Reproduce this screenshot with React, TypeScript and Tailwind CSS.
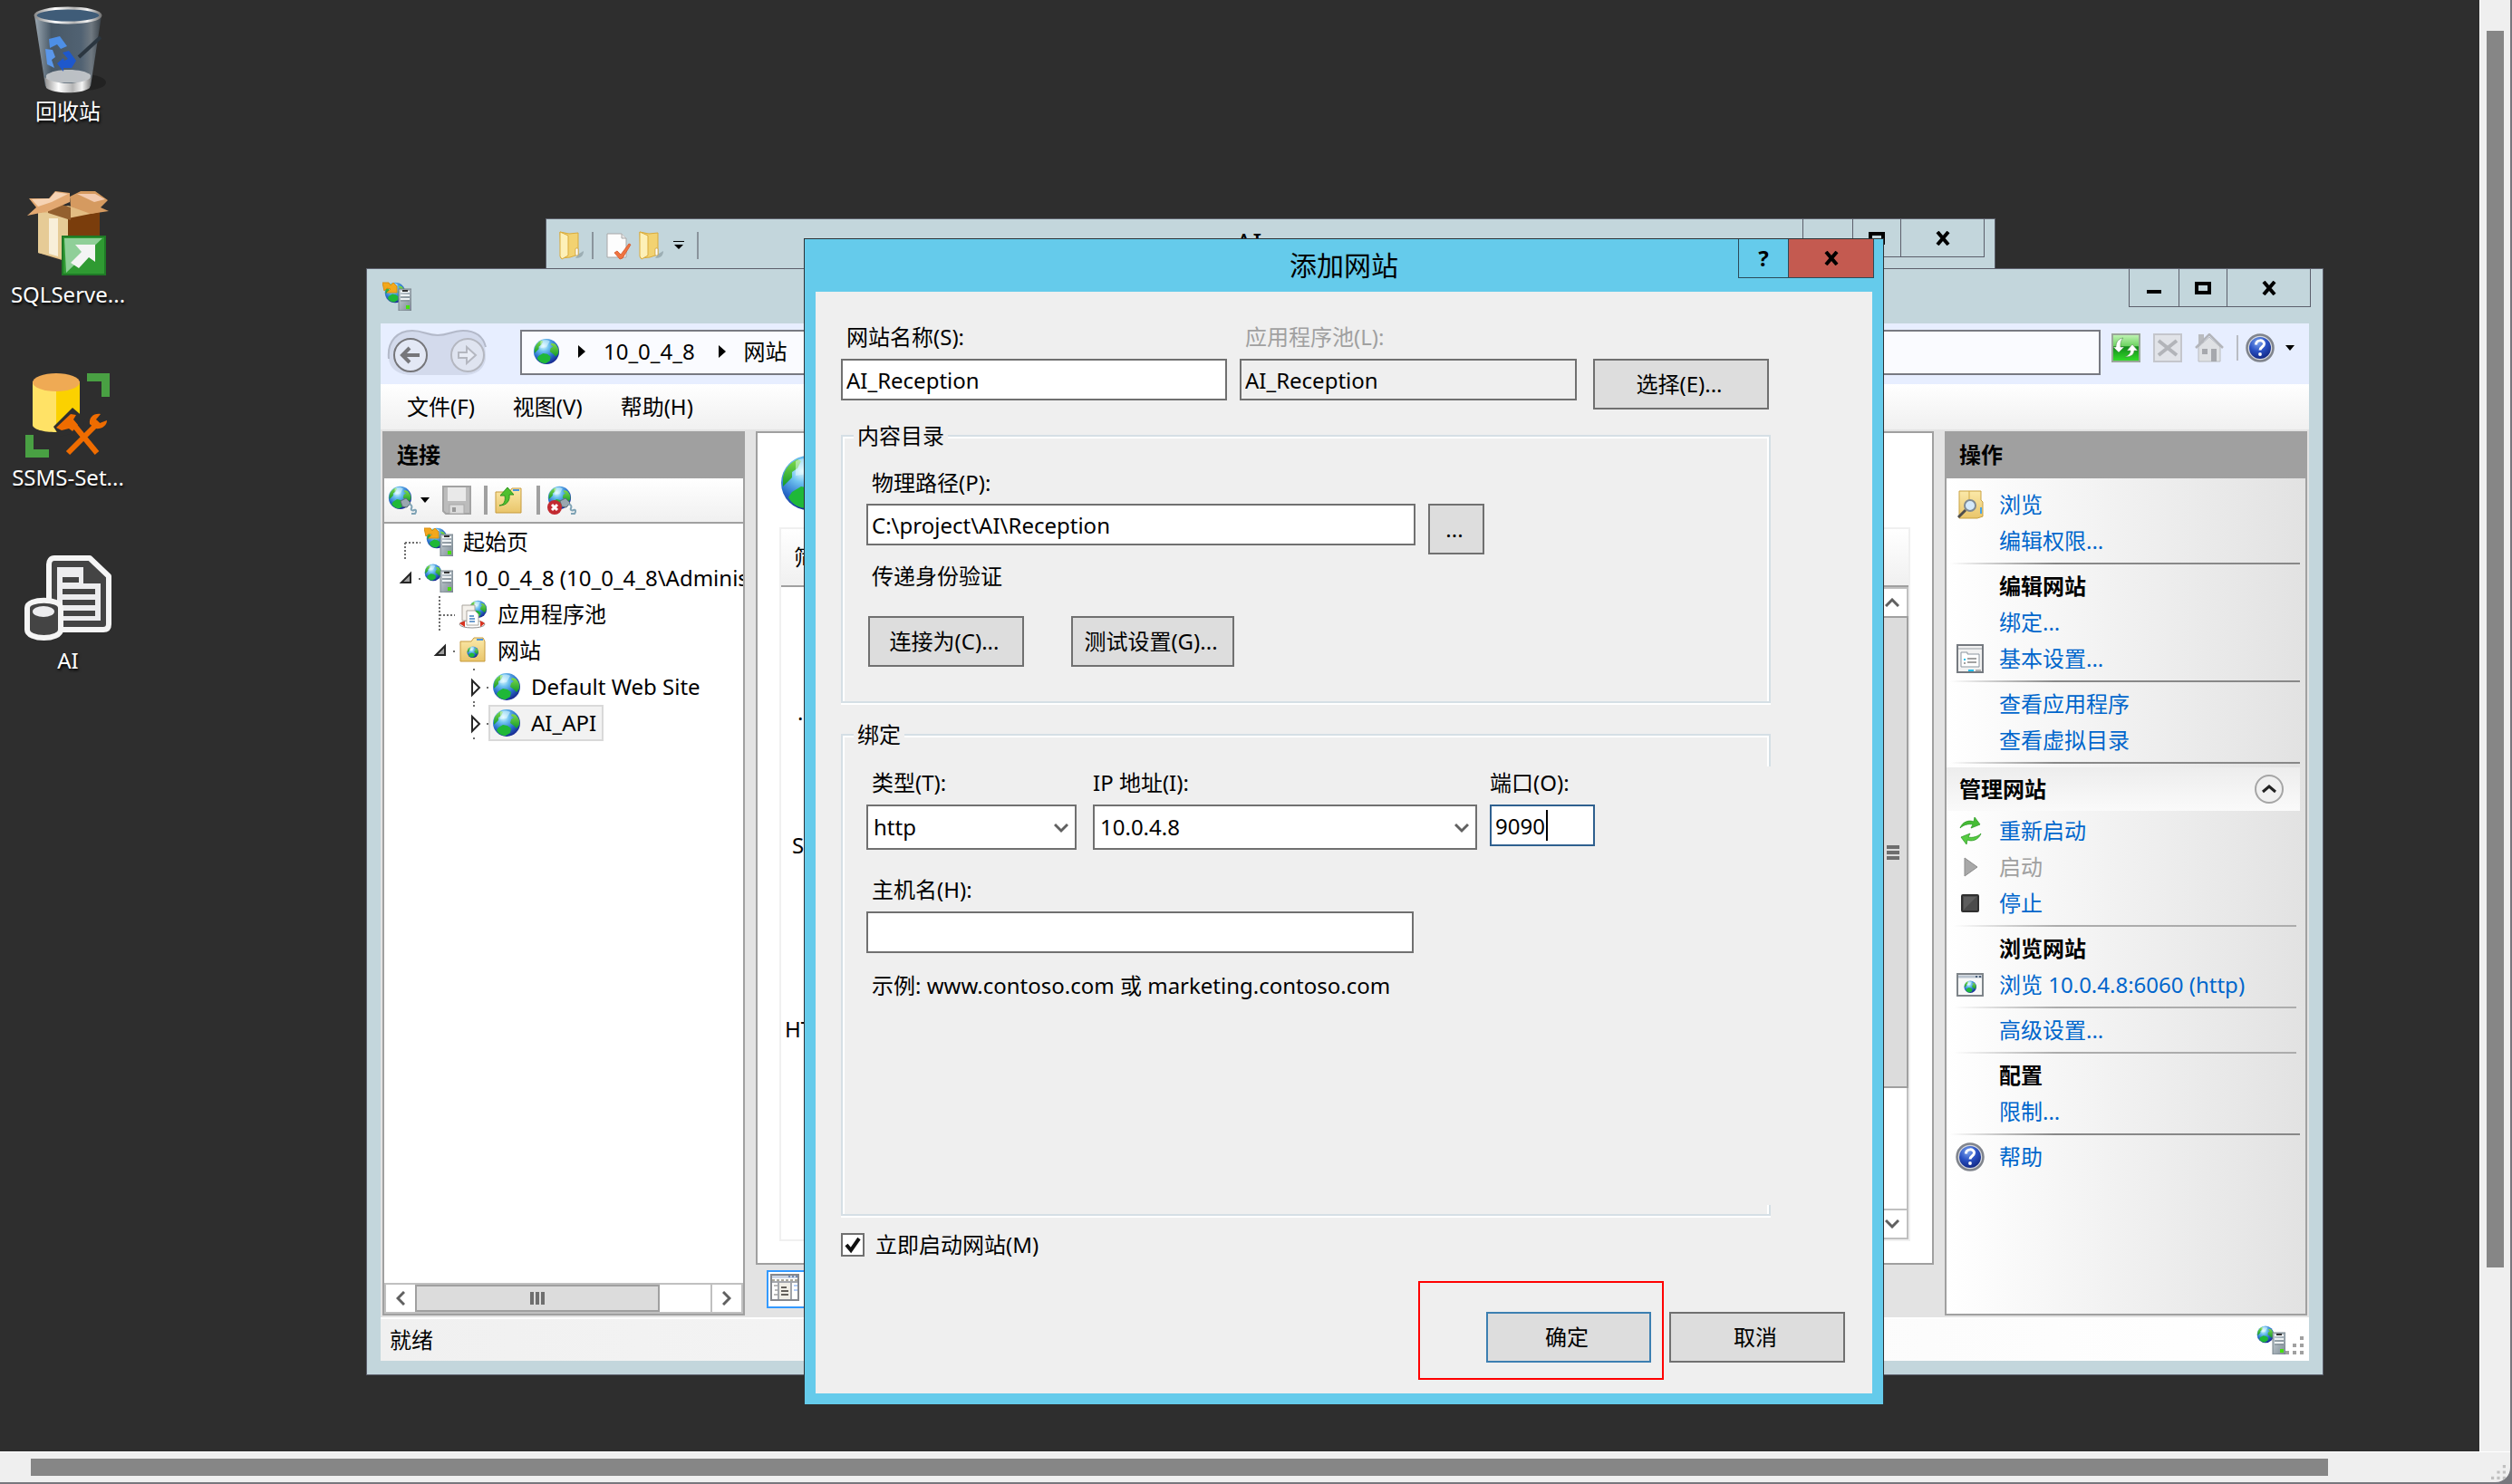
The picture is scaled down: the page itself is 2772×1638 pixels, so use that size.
import { useState } from 'react'
import type { ReactNode } from 'react'

function Defs() {
  return (
    <svg className="absolute h-0 w-0" aria-hidden="true">
      <defs>
        <radialGradient id="sea" cx="0.38" cy="0.28" r="0.75">
          <stop offset="0" stopColor="#e4fbff" />
          <stop offset="0.28" stopColor="#6fc3f0" />
          <stop offset="0.65" stopColor="#2a6fcb" />
          <stop offset="1" stopColor="#16268f" />
        </radialGradient>
        <linearGradient id="land" x1="0" y1="0" x2="0" y2="1">
          <stop offset="0" stopColor="#7fd94a" />
          <stop offset="1" stopColor="#129a2b" />
        </linearGradient>
        <linearGradient id="metal" x1="0" y1="0" x2="1" y2="1">
          <stop offset="0" stopColor="#c9d2d8" />
          <stop offset="1" stopColor="#7f8c96" />
        </linearGradient>
        <linearGradient id="manila" x1="0" y1="0" x2="0" y2="1">
          <stop offset="0" stopColor="#fbe9a9" />
          <stop offset="1" stopColor="#e9c56a" />
        </linearGradient>
        <linearGradient id="glass" x1="0" y1="0" x2="1" y2="0">
          <stop offset="0" stopColor="#a9b7c2" />
          <stop offset="0.25" stopColor="#4b5d6d" />
          <stop offset="0.7" stopColor="#55687a" />
          <stop offset="0.85" stopColor="#77818a" />
          <stop offset="1" stopColor="#39434c" />
        </linearGradient>
        <linearGradient id="chrome" x1="0" y1="0" x2="1" y2="0">
          <stop offset="0" stopColor="#8d8d8d" />
          <stop offset="0.3" stopColor="#ffffff" />
          <stop offset="0.6" stopColor="#b4b4b4" />
          <stop offset="0.8" stopColor="#f4f4f4" />
          <stop offset="1" stopColor="#777777" />
        </linearGradient>
        <linearGradient id="reload" x1="0" y1="0" x2="0" y2="1">
          <stop offset="0" stopColor="#c4f5b8" />
          <stop offset="0.42" stopColor="#6fd463" />
          <stop offset="0.46" stopColor="#118a1a" />
          <stop offset="1" stopColor="#35e02a" />
        </linearGradient>
        <radialGradient id="helpBlue" cx="0.4" cy="0.25" r="0.8">
          <stop offset="0" stopColor="#7ea6ee" />
          <stop offset="0.5" stopColor="#2a52c4" />
          <stop offset="1" stopColor="#10257f" />
        </radialGradient>
      </defs>
    </svg>
  )
}

function GlobeShape() {
  return (
    <>
      <circle cx="16" cy="16" r="15" fill="url(#sea)" />
      <path d="M2 13c1-5 4-8 8-10l2 1-2 4-3 2v3l-3 3-2 2z" fill="url(#land)" />
      <path d="M22 6l4 1c3 3 5 6 4 11l-3 4-3-3-4-3 1-4 3-2-3-2z" fill="url(#land)" />
      <path d="M7 21l5-3 5 1 4 3-1 5-5 3c-4 0-8-2-10-6z" fill="#1fb838" />
      <path d="M9 4c3-2 8-2 11 0l-4 7-7 1z" fill="#e9fbff" opacity="0.5" />
    </>
  )
}

function Globe({ className = 'h-8 w-8' }: { className?: string }) {
  return <svg className={className} viewBox="0 0 32 32"><GlobeShape /></svg>
}

function ServerShape() {
  return (
    <>
      <rect x="18" y="8" width="14" height="24" fill="url(#metal)" stroke="#77828a" strokeWidth="1" />
      <rect x="20" y="10" width="10" height="2" fill="#f1f5f7" />
      <rect x="22" y="9" width="6" height="2" fill="#333" />
      <path d="M20 15h10M20 19h10" stroke="#eef2f4" strokeWidth="2" />
      <path d="M20 17h10M20 21h10" stroke="#7b868e" strokeWidth="1" />
      <rect x="26" y="26" width="4" height="4" fill="#46e010" />
    </>
  )
}

function ServerGlobe({ badge = false, className = 'h-8 w-8' }: { badge?: boolean; className?: string }) {
  return (
    <svg className={className} viewBox="0 0 32 32">
      <g transform={badge ? 'translate(2 0) scale(0.75)' : 'scale(0.62)'}><GlobeShape /></g>
      {badge && <path d="M0 1h7l2 3 3-3 4 4 0 7H5l4-4-4-1-3 3z" fill="#f3a81c" stroke="#d98e12" strokeWidth="1" />}
      <ServerShape />
    </svg>
  )
}

function PlugGlobe({ off = false }: { off?: boolean }) {
  return (
    <svg className="h-8 w-8" viewBox="0 0 32 32">
      <g transform="scale(0.84)"><GlobeShape /></g>
      <path d="M14 17l6-3 5 5-4 5-5-1z" fill="#9aa7b0" stroke="#5f6d77" />
      <path d="M23 21c3-1 4 2 3 4s1 3 3 2 3 1 1 4h-4" fill="none" stroke="#7fa3b5" strokeWidth="2" />
      {off && (
        <>
          <circle cx="8" cy="24" r="8" fill="#c22a30" />
          <path d="M5 21l6 6M11 21l-6 6" stroke="#fff" strokeWidth="3" />
        </>
      )}
    </svg>
  )
}

function SaveIcon() {
  return (
    <svg className="h-8 w-8" viewBox="0 0 32 32">
      <path d="M1 1h30v30H4l-3-3z" fill="#bcbcbc" stroke="#a3a3a3" strokeWidth="2" />
      <rect x="6" y="2" width="20" height="15" fill="#e9e9e9" />
      <rect x="8" y="21" width="16" height="10" fill="#dcdcdc" stroke="#a8a8a8" />
      <rect x="11" y="24" width="4" height="5" fill="#999" />
    </svg>
  )
}

function FolderUpIcon() {
  return (
    <svg className="h-8 w-8" viewBox="0 0 32 32">
      <path d="M1 7h15l3-4h10v27H1z" fill="url(#manila)" stroke="#c79a3c" strokeWidth="1" />
      <path d="M20 5h7" stroke="#4b93dc" strokeWidth="2" />
      <path d="M5 22c6-1 7-6 6-11H6l8-9 7 8h-5c1 7-3 12-11 12z" fill="#4fc02e" stroke="#2f9420" strokeWidth="1" />
    </svg>
  )
}

function SiteFolderIcon() {
  return (
    <svg className="h-8 w-8" viewBox="0 0 32 32">
      <path d="M2 6h12l3-4h10l2 4v22H2z" fill="url(#manila)" stroke="#c79a3c" strokeWidth="1" />
      <path d="M20 4h7" stroke="#4b93dc" strokeWidth="2" />
      <g transform="translate(9 11) scale(0.42)"><GlobeShape /></g>
    </svg>
  )
}

function PoolIcon() {
  return (
    <svg className="h-8 w-8" viewBox="0 0 32 32">
      <g transform="translate(11 0) scale(0.65)"><GlobeShape /></g>
      <ellipse cx="15" cy="27" rx="14" ry="4" fill="#fff" stroke="#8d8d8d" />
      <path d="M1 26l6-3v7zM24 23l5 3-5 4z" fill="#d8321f" />
      <path d="M4 6h14v17H4z" fill="#f4f1ec" stroke="#a9a49c" />
      <path d="M9 12h9l4 4v12H9z" fill="#fff" stroke="#a9a49c" />
      <path d="M12 18h5M12 21h6M12 24h6" stroke="#3f7fc0" strokeWidth="1.4" />
    </svg>
  )
}

function OpenFolderIcon() {
  return (
    <svg className="h-8 w-7" viewBox="0 0 28 32">
      <path d="M18 30c6 0 9-3 9-8l-5 3z" fill="#9caeb4" />
      <path d="M1 1l10 2 10-1v24l-9 3-10 1z" fill="#f2d271" stroke="#d9ab3c" strokeWidth="1" />
      <path d="M1 1l9 4v22l-7 4-2-3z" fill="#fdf0b8" stroke="#d9ab3c" strokeWidth="1" />
      <rect x="18" y="19" width="3" height="8" rx="1" fill="#fff" stroke="#c69a33" strokeWidth="0.7" />
    </svg>
  )
}

function CheckDocIcon() {
  return (
    <svg className="h-8 w-7" viewBox="0 0 28 32">
      <path d="M1 3h16l5 5v21H1z" fill="#fdfdfd" stroke="#a8a8a8" strokeWidth="1" />
      <path d="M17 3v5h5" fill="#e6e6e6" stroke="#a8a8a8" />
      <path d="M9 24l3-2 4 4 9-12 2 1-9 15-3 1z" fill="#ef7440" stroke="#d4552a" strokeWidth="0.8" />
    </svg>
  )
}

function HelpIcon() {
  return (
    <svg className="h-8 w-8" viewBox="0 0 32 32">
      <circle cx="16" cy="16" r="14.5" fill="#d5d8de" stroke="#80848c" strokeWidth="2.5" />
      <circle cx="16" cy="16" r="12" fill="url(#helpBlue)" />
      <path d="M11.500 12.500c0-6 9-6 9-1 0 3.500-4.500 3.500-4.500 7" fill="none" stroke="#fff" strokeWidth="3" />
      <circle cx="16" cy="23" r="1.900" fill="#fff" />
    </svg>
  )
}

function RefreshIcon() {
  return (
    <svg className="h-8 w-8" viewBox="0 0 32 32">
      <rect x="1" y="1" width="30" height="30" fill="url(#reload)" stroke="#9aa79a" strokeWidth="2" />
      <path d="M13 5c-6 1-8 5-8 10H2l6 6 6-6h-4c0-4 0-7 3-10z" fill="#fff" stroke="#4f8a4c" strokeWidth="0.6" />
      <path d="M15 26c7 0 10-3 10-7h4l-6-7-6 7h4c0 3-2 5-6 7z" fill="#fff" stroke="#4f8a4c" strokeWidth="0.6" />
    </svg>
  )
}

function StopLoadIcon() {
  return (
    <svg className="h-8 w-8" viewBox="0 0 32 32">
      <rect x="1" y="1" width="30" height="30" fill="#e1e3e8" stroke="#c4c6cc" strokeWidth="2" />
      <path d="M6 8l20 16M26 8L6 24" stroke="#b2b4b9" strokeWidth="4" />
    </svg>
  )
}

function HomeIcon() {
  return (
    <svg className="h-8 w-8" viewBox="0 0 32 32">
      <path d="M4 1h6v10H4z" fill="#b9bbbf" />
      <path d="M4 15L16 4l12 11v16H4z" fill="#dfe1e4" stroke="#b9bbbf" />
      <path d="M1 16L16 1l15 15" fill="none" stroke="#b3b5ba" strokeWidth="2.500" />
      <rect x="18" y="17" width="6" height="14" fill="#a6a8ad" />
      <rect x="8" y="17" width="6" height="6" fill="#a6a8ad" />
    </svg>
  )
}

function BrowseFolderIcon() {
  return (
    <svg className="h-8 w-8" viewBox="0 0 32 32">
      <path d="M4 1h24v10l2 2v16l-6 2H4z" fill="url(#manila)" stroke="#c9a243" />
      <path d="M15 1v12" stroke="#d2aa49" />
      <circle cx="16" cy="17" r="6" fill="#d4e9fa" stroke="#7f8a93" strokeWidth="2" />
      <path d="M11 22l-8 8" stroke="#4d4d4d" strokeWidth="3" />
      <path d="M28 19v7" stroke="#49a5e8" strokeWidth="2" />
    </svg>
  )
}

function SettingsPageIcon() {
  return (
    <svg className="h-8 w-8" viewBox="0 0 32 32">
      <rect x="2" y="1" width="28" height="30" fill="#f2f2f2" stroke="#757a80" strokeWidth="2" />
      <path d="M3 5h26" stroke="#9aa0a6" strokeWidth="1" />
      <path d="M6 9h7v2h13v14H6z" fill="#fff" stroke="#8c96a0" />
      <path d="M9 17h2" stroke="#22c0ee" strokeWidth="2" />
      <path d="M13 16h10M13 20h10M9 21h2" stroke="#848484" strokeWidth="1.500" />
      <path d="M14 29h6" stroke="#22c0ee" strokeWidth="2" />
      <path d="M22 29h6" stroke="#b0b0b0" strokeWidth="2" />
    </svg>
  )
}

function BrowseSiteIcon() {
  return (
    <svg className="h-8 w-8" viewBox="0 0 32 32">
      <rect x="2" y="4" width="28" height="24" fill="#f7f8f8" stroke="#7e8489" strokeWidth="2" />
      <path d="M3 7h26" stroke="#b9c3cf" strokeWidth="3" />
      <path d="M22 7h2M26 7h2" stroke="#4b5f7a" strokeWidth="2" />
      <g transform="translate(9 11) scale(0.45)"><GlobeShape /></g>
    </svg>
  )
}

function RestartIcon() {
  return (
    <svg className="h-8 w-8" viewBox="0 0 32 32">
      <path d="M5 13C8 5 16 4 20 6l1-5 6 8-10 4 2-4c-4-1-10 0-14 4z" fill="#46bd36" stroke="#2f9a25" strokeWidth="0.8" />
      <path d="M28 19c-3 8-11 9-15 7l-1 5-6-8 10-4-2 4c4 1 10 0 14-4z" fill="#56cc42" stroke="#2f9a25" strokeWidth="0.8" />
    </svg>
  )
}

function PlayIcon() {
  return <svg className="h-8 w-8" viewBox="0 0 32 32"><path d="M10 6l14 10-14 10z" fill="#a8a8a8" stroke="#8a8a8a" /></svg>
}

function HaltIcon() {
  return (
    <svg className="h-8 w-8" viewBox="0 0 32 32">
      <rect x="7" y="7" width="18" height="18" rx="1" fill="#4b4b4b" stroke="#2f2f2f" strokeWidth="2" />
      <path d="M9 23V9h14z" fill="#5e5e5e" />
    </svg>
  )
}

function FeatureViewIcon() {
  return (
    <svg className="h-[30px] w-8 shrink-0" viewBox="0 0 32 30">
      <rect x="1" y="1" width="30" height="28" fill="#fff" stroke="#85888e" strokeWidth="2" />
      <rect x="2" y="2" width="28" height="3" fill="#ccd5e4" />
      <path d="M20 3h2M24 3h2M28 3h2" stroke="#7189b0" strokeWidth="2" />
      <path d="M2 7h28" stroke="#aaa79c" strokeWidth="2" strokeDasharray="3 2" />
      <rect x="10" y="9" width="12" height="19" fill="#f0eee6" />
      <path d="M9 9v19M23 9v19M2 9h28" stroke="#a3a6ac" strokeWidth="2" />
      <path d="M12 15h6M12 19h8M12 23h8" stroke="#63605a" strokeWidth="2" />
      <path d="M4 13h4M5 18h3M4 23h4" stroke="#b8b8b8" strokeWidth="2" />
      <path d="M26 13h4M26 18h4" stroke="#b3cdf7" strokeWidth="2" />
    </svg>
  )
}

function RecycleBinIcon() {
  return (
    <svg className="h-24 w-24" viewBox="0 0 96 96">
      <ellipse cx="66" cy="84" rx="24" ry="9" fill="#1b1b1b" opacity="0.6" />
      <path d="M11 10l12 78c8 7 43 7 50 0l12-78z" fill="url(#glass)" opacity="0.9" />
      <path d="M24 76c8-8 42-8 49 0l-1 8H24z" fill="#cfd1d3" opacity="0.85" />
      <path d="M22 78c8 9 44 9 52 0l-2 12c-8 7-40 7-48 0z" fill="url(#chrome)" />
      <path d="M60 56l24-22" stroke="#2b3640" strokeWidth="4" />
      <ellipse cx="48" cy="10" rx="36" ry="8" fill="#3f5c78" stroke="url(#chrome)" strokeWidth="3" />
      <path d="M27 36l12-3 8 11-7 3-4-5-8 4z" fill="#4d8fe6" />
      <path d="M23 47l8 1 3 8-4 3 3 9-8-4z" fill="#5a97ea" />
      <path d="M42 51l7-2 8 11-5 8h-9v4l-7-9 7-6 1 3 4-2z" fill="#1e58cc" />
    </svg>
  )
}

function SqlBoxIcon() {
  return (
    <svg className="h-24 w-24" viewBox="0 0 96 96">
      <path d="M15 26l33-8 35 8v40L48 80 15 70z" fill="#e3bc82" />
      <path d="M48 32l35-7v42l-35 12z" fill="#7a3d0c" />
      <path d="M15 26h33v52L15 70z" fill="#e6cb96" />
      <path d="M27 32h10v42l-10-3z" fill="#f8efd9" />
      <path d="M26 26V12l25 8v14z" fill="#94602f" />
      <path d="M5 10h22l7-8 16 2v10L27 24 3 29l10-9z" fill="#e2a871" />
      <path d="M8 11l20-1 6-7 14 2-18 9-15 5z" fill="#f6d3b4" />
      <path d="M50 8l12-6h16l14 10-8 8 9 4-20 3-22-8z" fill="#d59a60" />
      <path d="M58 5h20l11 6-12 3z" fill="#f3cbb0" />
      <path d="M42 52h47v42H42z" fill="#2f9a32" stroke="#1f7a26" strokeWidth="2" />
      <path d="M44 54h42l-40 38z" fill="#8fcf98" />
      <path d="M56 61h22v19l-7-5-11 12-9-6 12-12z" fill="#f4f4f4" />
    </svg>
  )
}

function SsmsIcon() {
  return (
    <svg className="h-24 w-24" viewBox="0 0 96 96">
      <path d="M9 10v48c0 5 12 8 26 8V10z" fill="#ffe266" />
      <path d="M35 10h26v48c-4 6-14 8-26 8z" fill="#fbd100" />
      <ellipse cx="35" cy="11" rx="26" ry="10" fill="#efaa54" />
      <path d="M69 1h25v26h-9V10H69zM1 69h9v16h17v9H1z" fill="#49a043" />
      <path d="M32 60l21-21 14 12-4 14-24 6z" fill="#2e2e2e" />
      <path d="M48 89l34-34M52 55l28 34" stroke="#ef6c00" strokeWidth="6" />
      <path d="M35 61l16-15 6 1-3 5 5 6-6 7-4-3-8 2z" fill="#ef6c00" />
      <path d="M84 46c-8-1-13 4-12 11l6 5c7 1 13-3 13-9l-8 3-4-4z" fill="#ef6c00" />
    </svg>
  )
}

function ScriptDbIcon() {
  return (
    <svg className="h-24 w-24" viewBox="0 0 96 96">
      <path d="M27 52V10c0-4 2-7 6-7h39l21 20v53c0 4-2 6-6 6H38" fill="#444" stroke="#f5f5f5" strokeWidth="6" strokeLinejoin="round" />
      <path d="M36 13h29v18h19v41H36z" fill="#ececee" />
      <path d="M42 27h18M42 40h36M42 52h36M42 64h36" stroke="#444" strokeWidth="6" />
      <path d="M3 58c0-11 37-11 37 0v24c0 12-37 12-37 0z" fill="#444" stroke="#f5f5f5" strokeWidth="6" />
      <ellipse cx="21" cy="62" rx="12" ry="6" fill="#ececee" />
    </svg>
  )
}

const desktopIcons = [
  { label: '回收站', icon: <RecycleBinIcon /> },
  { label: 'SQLServe...', icon: <SqlBoxIcon /> },
  { label: 'SSMS-Set...', icon: <SsmsIcon /> },
  { label: 'AI', icon: <ScriptDbIcon /> },
]

function DesktopIcons() {
  return (
    <ul className="flex w-[150px] flex-col gap-[68px] pt-[7px]">
      {desktopIcons.map((item) => (
        <li key={item.label} className="flex flex-col items-center gap-[2px]">
          {item.icon}
          <span className="leading-9 text-white [text-shadow:1px_2px_3px_#000]">{item.label}</span>
        </li>
      ))}
    </ul>
  )
}

function Caret({ className = '' }: { className?: string }) {
  return <svg className={`h-[6px] w-[10px] shrink-0 ${className}`} viewBox="0 0 10 6"><path d="M0 0h10L5 6z" /></svg>
}

function MinMaxGlyph({ kind }: { kind: 'min' | 'max' | 'close' }) {
  return (
    <svg className="h-4 w-[18px]" viewBox="0 0 18 16">
      {kind === 'min' && <path d="M1 10h16v4H1z" />}
      {kind === 'max' && <path d="M2 3h14v10H2z" fill="none" stroke="#000" strokeWidth="4" />}
      {kind === 'close' && <path d="M3 1l12 14M15 1L3 15" stroke="#000" strokeWidth="4" />}
    </svg>
  )
}

function CaptionButtons() {
  return (
    <div className="flex h-[42px] divide-x divide-[#5c5f6b] border border-t-0 border-[#5c5f6b]">
      <button aria-label="最小化" className="flex w-[55px] items-center justify-center"><MinMaxGlyph kind="min" /></button>
      <button aria-label="最大化" className="flex w-[53px] items-center justify-center"><MinMaxGlyph kind="max" /></button>
      <button aria-label="关闭" className="flex w-[91px] items-center justify-center"><MinMaxGlyph kind="close" /></button>
    </div>
  )
}

function ExplorerWindow() {
  return (
    <div className="absolute top-[241px] left-[602px] h-[200px] w-[1600px] border border-[#5c5f6b] bg-[#c3d6dc]">
      <div className="flex items-start">
        <div className="flex h-[58px] flex-1 items-center pl-[14px]">
          <OpenFolderIcon />
          <span className="ml-2 h-[30px] w-[2px] bg-[#8a949c]" />
          <span className="ml-[14px]"><CheckDocIcon /></span>
          <span className="ml-2"><OpenFolderIcon /></span>
          <svg className="ml-[10px] h-[10px] w-[12px]" viewBox="0 0 12 10"><path d="M0 0h12v1H0zM1 4h10L6 9z" /></svg>
          <span className="ml-[14px] h-[30px] w-[2px] bg-[#8a949c]" />
          <span className="ml-[592px] pb-1 text-[30px] leading-9">AI</span>
        </div>
        <div className="pr-[11px]"><CaptionButtons /></div>
      </div>
    </div>
  )
}

function AddressBar() {
  return (
    <div className="flex h-[67px] items-center bg-[#e7eeff] pb-1 pl-[7px]">
      <svg className="h-[54px] w-[112px]" viewBox="0 0 112 54">
        <path d="M2 34C0 14 12 3 28 3c12 0 16 5 28 5S72 3 84 3c18 0 26 12 25 31-2 14-14 18-24 18H28C14 52 3 46 2 34z" fill="#d3daec" />
        <path d="M2 34C0 14 12 3 28 3c12 0 16 5 28 5S72 3 84 3c14 0 22 6 25 18" fill="none" stroke="#b3b9c9" strokeWidth="2" />
        <circle cx="26" cy="30" r="18" fill="#e3e8f5" stroke="#76767a" strokeWidth="2" />
        <path d="M36 30H18M25 22l-8 8 8 8" fill="none" stroke="#76767a" strokeWidth="4" />
        <circle cx="89" cy="30" r="18" fill="#dfe4f0" stroke="#b4b7c0" strokeWidth="2" />
        <path d="M79 27h9v-6l10 9-10 9v-6h-9z" fill="#e8ecf5" stroke="#b4b7c0" strokeWidth="2" />
      </svg>
      <div className="ml-[35px] flex h-[50px] flex-1 items-center border-2 border-[#787a82] bg-[#fafbff] pb-[2px] pl-3">
        <Globe className="h-[30px] w-[30px]" />
        <svg className="ml-5 h-[14px] w-2" viewBox="0 0 8 14"><path d="M0 0l8 7-8 7z" /></svg>
        <span className="ml-5">10_0_4_8</span>
        <svg className="ml-[26px] h-[14px] w-2" viewBox="0 0 8 14"><path d="M0 0l8 7-8 7z" /></svg>
        <span className="ml-5">网站</span>
      </div>
      <div className="flex items-center pr-4 pb-[10px] pl-3">
        <button aria-label="刷新"><RefreshIcon /></button>
        <button aria-label="停止加载" className="ml-[14px]"><StopLoadIcon /></button>
        <button aria-label="主页" className="ml-[14px]"><HomeIcon /></button>
        <span className="ml-[14px] h-7 w-[2px] bg-[#b9bcc4]" />
        <button aria-label="帮助" className="ml-2 flex items-center"><HelpIcon /><Caret className="ml-3" /></button>
      </div>
    </div>
  )
}

function MenuBar() {
  return (
    <nav className="flex h-[50px] items-center gap-[42px] bg-linear-to-b from-white to-[#f0f0f0] pl-[29px]">
      <button>文件(F)</button>
      <button>视图(V)</button>
      <button>帮助(H)</button>
    </nav>
  )
}

type Gutter = 'start' | 'server' | 'pool' | 'sites' | 'leaf'

function TreeGutter({ kind }: { kind: Gutter }) {
  const dots = { stroke: '#6e6e6e', strokeWidth: 2, strokeDasharray: '2 2', fill: 'none' }
  if (kind === 'start') return <svg className="h-10 w-10 shrink-0" viewBox="0 0 40 40"><path d="M23 21h17M23 21v19" {...dots} /></svg>
  if (kind === 'server') {
    return (
      <svg className="h-10 w-10 shrink-0" viewBox="0 0 40 40">
        <path d="M29 15v10H19z" fill="#a0a0a0" stroke="#262626" strokeWidth="2" />
        <path d="M38 21h2" {...dots} />
      </svg>
    )
  }
  if (kind === 'pool') return <svg className="h-10 w-[78px] shrink-0" viewBox="0 0 78 40"><path d="M61 21h17M61 0v40" {...dots} /></svg>
  if (kind === 'sites') {
    return (
      <svg className="h-10 w-[78px] shrink-0" viewBox="0 0 78 40">
        <path d="M67 15v10H57z" fill="#a0a0a0" stroke="#262626" strokeWidth="2" />
        <path d="M76 21h2" {...dots} />
      </svg>
    )
  }
  return (
    <svg className="h-10 w-[115px] shrink-0" viewBox="0 0 115 40">
      <path d="M97 13v16l8-8z" fill="#fff" stroke="#262626" strokeWidth="2" />
      <path d="M99 0v3M99 36v4M113 21h2" {...dots} />
    </svg>
  )
}

const tree: { label: string; gutter: Gutter; icon: ReactNode; selected?: boolean }[] = [
  { label: '起始页', gutter: 'start', icon: <ServerGlobe badge /> },
  { label: '10_0_4_8 (10_0_4_8\\Administrator)', gutter: 'server', icon: <ServerGlobe /> },
  { label: '应用程序池', gutter: 'pool', icon: <PoolIcon /> },
  { label: '网站', gutter: 'sites', icon: <SiteFolderIcon /> },
  { label: 'Default Web Site', gutter: 'leaf', icon: <Globe /> },
  { label: 'AI_API', gutter: 'leaf', icon: <Globe />, selected: true },
]

function ConnectionsPanel() {
  return (
    <section className="flex w-[400px] flex-col border-2 border-t-0 border-[#a0a0a0] bg-white">
      <h2 className="h-[52px] bg-[#a0a0a0] pl-[14px] leading-[52px] font-bold">连接</h2>
      <div className="flex h-[50px] items-center border-b-2 border-[#a0a0a0] bg-linear-to-b from-white to-[#f0f0f0] pl-1">
        <button aria-label="连接" className="flex items-center"><PlugGlobe /><Caret className="ml-1" /></button>
        <button aria-label="保存" className="ml-[14px]"><SaveIcon /></button>
        <span className="ml-[14px] h-8 w-1 bg-[#a0a0a0]" />
        <button aria-label="向上" className="ml-2"><FolderUpIcon /></button>
        <span className="ml-[14px] h-8 w-1 bg-[#a0a0a0]" />
        <button aria-label="断开连接" className="ml-2"><PlugGlobe off /></button>
      </div>
      <ul className="flex-1 overflow-hidden">
        {tree.map((node) => (
          <li key={node.label} className="flex h-10">
            <TreeGutter kind={node.gutter} />
            <div className={`flex h-10 items-center gap-[11px] border-2 pr-[6px] pl-[2px] ${node.selected ? 'border-[#d9d9d9] bg-[#f2f2f2]' : 'border-transparent'}`}>
              <span className="w-8 shrink-0">{node.icon}</span>
              <span className="whitespace-nowrap">{node.label}</span>
            </div>
          </li>
        ))}
      </ul>
      <div className="flex h-[34px] border-2 border-r-0 border-[#c0c0c0]">
        <button aria-label="向左滚动" className="flex w-8 items-center justify-center">
          <svg className="h-4 w-[10px]" viewBox="0 0 10 16"><path d="M9 1L2 8l7 7" fill="none" stroke="#606060" strokeWidth="3" /></svg>
        </button>
        <div className="flex w-[270px] items-center justify-center gap-[2px] bg-[#dcdcdc] outline-2 -outline-offset-2 outline-[#a0a0a0]">
          <span className="h-[14px] w-1 bg-[#6e6e6e]" />
          <span className="h-[14px] w-1 bg-[#6e6e6e]" />
          <span className="h-[14px] w-1 bg-[#6e6e6e]" />
        </div>
        <button aria-label="向右滚动" className="ml-auto flex w-9 items-center justify-center border-x-2 border-[#c0c0c0]">
          <svg className="h-4 w-[10px]" viewBox="0 0 10 16"><path d="M1 1l7 7-7 7" fill="none" stroke="#606060" strokeWidth="3" /></svg>
        </button>
      </div>
    </section>
  )
}

function FeaturePanel() {
  return (
    <section className="flex min-w-0 flex-1 flex-col px-3">
      <div className="flex flex-1 flex-col border-2 border-[#a0a0a0] bg-white px-6 pb-6">
        <div className="flex h-[104px] items-center pt-[6px]">
          <Globe className="h-16 w-16" />
        </div>
        <div className="flex flex-1 flex-col border-2 border-[#f0f0f0]">
          <div className="flex h-[64px] items-center border-b-2 border-[#a0a0a0] bg-linear-to-b from-white to-[#f0f0f0] pl-[14px]">筛选</div>
          <div className="flex flex-1">
            <div className="flex flex-1 flex-col gap-[111px] pt-[120px]">
              <span className="h-9 pl-[18px] leading-9">.NET</span>
              <span className="h-9 pl-3 leading-9">SMTP</span>
              <span className="mt-[56px] h-9 pl-1 leading-9">HTTP</span>
            </div>
            <div className="flex w-[34px] flex-col border-2 border-l-0 border-[#c0c0c0] bg-white">
              <button aria-label="向上滚动" className="flex h-[30px] items-center justify-center">
                <svg className="h-[10px] w-4" viewBox="0 0 16 10"><path d="M1 9l7-7 7 7" fill="none" stroke="#606060" strokeWidth="3" /></svg>
              </button>
              <div className="-mr-[2px] flex h-[521px] flex-col items-center justify-center gap-[2px] border-2 border-[#a0a0a0] bg-[#dcdcdc]">
                <span className="h-1 w-[14px] bg-[#6e6e6e]" />
                <span className="h-1 w-[14px] bg-[#6e6e6e]" />
                <span className="h-1 w-[14px] bg-[#6e6e6e]" />
              </div>
              <button aria-label="向下滚动" className="mt-auto flex h-8 items-center justify-center border-t-2 border-[#c0c0c0]">
                <svg className="h-[10px] w-4" viewBox="0 0 16 10"><path d="M1 1l7 7 7-7" fill="none" stroke="#606060" strokeWidth="3" /></svg>
              </button>
            </div>
          </div>
        </div>
      </div>
      <div className="h-[56px] pt-[6px] pl-3">
        <button aria-label="功能视图" className="flex h-[42px] w-[140px] border-2 border-[#3399ff] bg-white pt-[2px] pl-[2px]">
          <FeatureViewIcon />
        </button>
      </div>
    </section>
  )
}

function ActionRow({ label, icon, disabled = false }: { label: string; icon?: ReactNode; disabled?: boolean }) {
  return (
    <div className="flex h-10 items-center gap-4 pl-[10px]">
      <span className="w-8 shrink-0">{icon}</span>
      {disabled
        ? <span className="text-[#a0a0a0]">{label}</span>
        : <a href="#" className="whitespace-nowrap text-[#0066cc]">{label}</a>}
    </div>
  )
}

function ActionHeading({ label }: { label: string }) {
  return <h3 className="h-10 pl-[58px] leading-10 font-bold">{label}</h3>
}

function Divider({ inner = false }: { inner?: boolean }) {
  return (
    <div className={`flex h-[10px] items-center ${inner ? 'pr-[10px] pl-2' : 'pr-[6px] pl-1'}`}>
      <span className={`h-[2px] w-full bg-linear-to-r from-transparent via-30% ${inner ? 'via-[#acacac] to-[#acacac]' : 'via-[#888] to-[#888]'}`} />
    </div>
  )
}

function ActionsPanel() {
  return (
    <section className="flex w-[400px] flex-col border-2 border-t-0 border-[#a0a0a0] bg-linear-to-r from-white to-[#e2e2e2]">
      <h2 className="h-[52px] bg-[#a0a0a0] pl-[14px] leading-[52px] font-bold">操作</h2>
      <div className="pt-[9px]">
        <ActionRow label="浏览" icon={<BrowseFolderIcon />} />
        <ActionRow label="编辑权限..." />
        <Divider />
        <ActionHeading label="编辑网站" />
        <ActionRow label="绑定..." />
        <ActionRow label="基本设置..." icon={<SettingsPageIcon />} />
        <Divider />
        <ActionRow label="查看应用程序" />
        <ActionRow label="查看虚拟目录" />
        <Divider />
        <div className="mr-[6px] mb-[2px] flex h-12 items-center justify-between bg-linear-to-b from-[#ededed] to-[#fafafa] pr-[18px] pl-[14px]">
          <h3 className="font-bold">管理网站</h3>
          <button aria-label="折叠" className="flex h-8 w-8 items-center justify-center rounded-full border-2 border-[#a5a5a5] bg-[#f0f0f0]">
            <svg className="h-[10px] w-4" viewBox="0 0 16 10"><path d="M1 8l7-6 7 6" fill="none" stroke="#222" strokeWidth="3" /></svg>
          </button>
        </div>
        <ActionRow label="重新启动" icon={<RestartIcon />} />
        <ActionRow label="启动" icon={<PlayIcon />} disabled />
        <ActionRow label="停止" icon={<HaltIcon />} />
        <Divider inner />
        <ActionHeading label="浏览网站" />
        <ActionRow label="浏览 10.0.4.8:6060 (http)" icon={<BrowseSiteIcon />} />
        <Divider inner />
        <ActionRow label="高级设置..." />
        <Divider inner />
        <ActionHeading label="配置" />
        <ActionRow label="限制..." />
        <Divider />
        <ActionRow label="帮助" icon={<HelpIcon />} />
      </div>
    </section>
  )
}

function ResizeGrip({ className = '' }: { className?: string }) {
  return (
    <svg className={className} viewBox="0 0 20 20">
      <path d="M16 0h4v4h-4zM8 8h4v4H8zM16 8h4v4h-4zM0 16h4v4H0zM8 16h4v4H8zM16 16h4v4h-4z" fill="currentColor" />
    </svg>
  )
}

function IisManagerWindow() {
  return (
    <div className="absolute top-[296px] right-[172px] bottom-[84px] left-[404px] flex flex-col border border-[#5c5f6b] bg-[#c3d6dc] px-[15px] pb-[15px]">
      <div className="-mr-[2px] flex h-[60px] shrink-0 items-start justify-between pl-[2px]">
        <span className="pt-[14px]"><ServerGlobe badge /></span>
        <CaptionButtons />
      </div>
      <div className="flex flex-1 flex-col bg-[#e3e3e3]">
        <AddressBar />
        <MenuBar />
        <div className="flex flex-1 px-[2px] pt-[2px] pb-[2px]">
          <ConnectionsPanel />
          <FeaturePanel />
          <ActionsPanel />
        </div>
        <div className="flex h-12 items-center justify-between border-t-2 border-white bg-linear-to-r from-[#f0f0f0] to-white pr-[6px] pl-[10px]">
          <span>就绪</span>
          <div className="flex items-end">
            <ServerGlobe />
            <ResizeGrip className="h-5 w-5 text-[#a0a0a0]" />
          </div>
        </div>
      </div>
    </div>
  )
}

function SelectField({ id, options, className }: { id: string; options: string[]; className: string }) {
  return (
    <div className={`relative ${className}`}>
      <select id={id} className="h-[50px] w-full appearance-none border-2 border-[#707070] bg-white pl-[6px]">
        {options.map((o) => <option key={o}>{o}</option>)}
      </select>
      <svg className="pointer-events-none absolute top-5 right-[9px] h-3 w-4" viewBox="0 0 16 12"><path d="M1 2l7 7 7-7" fill="none" stroke="#606060" strokeWidth="3" /></svg>
    </div>
  )
}

function DialogButton({ children, className }: { children: ReactNode; className: string }) {
  return <button className={`h-14 border-2 bg-[#dddddd] pr-1 ${className}`}>{children}</button>
}

const groupBox = 'border-2 border-[#d5dfe5] shadow-[inset_2px_2px_0_#fff,inset_-2px_0_0_#fff,0_2px_0_#fff]'

function AddSiteDialog() {
  const [name, setName] = useState('AI_Reception')
  const [path, setPath] = useState('C:\\project\\AI\\Reception')
  const [port, setPort] = useState('9090')
  const [host, setHost] = useState('')
  const [autoStart, setAutoStart] = useState(true)

  return (
    <div role="dialog" aria-labelledby="dialog-title" className="absolute top-[263px] left-[887px] w-[1192px] border border-b-0 border-[#2b3236] bg-[#65cbeb] px-3 pb-3">
      <div className="relative flex h-[58px] items-center justify-center">
        <h1 id="dialog-title" className="text-[30px] leading-[60px]">添加网站</h1>
        <div className="absolute top-0 -right-[2px] flex h-[43px] border border-t-0 border-[#2b4a58]">
          <button aria-label="帮助" className="w-[54px] text-2xl font-bold">?</button>
          <button aria-label="关闭" className="flex w-[94px] items-center justify-center border-l border-[#2b4a58] bg-[#c45a50]"><MinMaxGlyph kind="close" /></button>
        </div>
      </div>
      <form className="bg-[#efefef] pt-8 pr-[30px] pb-[34px] pl-[28px]" onSubmit={(e) => e.preventDefault()}>
        <div className="flex items-start">
          <div className="flex w-[426px] flex-col gap-[6px]">
            <label htmlFor="site-name" className="pl-[6px] leading-9">网站名称(S):</label>
            <input id="site-name" value={name} onChange={(e) => setName(e.target.value)} className="h-[46px] border-2 border-[#707070] bg-white px-1" />
          </div>
          <div className="ml-[14px] flex w-[372px] flex-col gap-[6px]">
            <label htmlFor="app-pool" className="pl-[6px] leading-9 text-[#a0a0a0]">应用程序池(L):</label>
            <input id="app-pool" readOnly value={name} className="h-[46px] border-2 border-[#707070] bg-[#efefef] px-1" />
          </div>
          <DialogButton className="mt-[42px] ml-[18px] w-[194px] border-[#707070]">选择(E)...</DialogButton>
        </div>

        <fieldset className={`mt-[11px] h-[313px] w-[1026px] ${groupBox}`}>
          <legend className="ml-3 bg-[#efefef] px-1 leading-9">内容目录</legend>
          <div className="flex flex-col items-start pt-4 pl-[26px]">
            <label htmlFor="physical-path" className="pl-[6px] leading-9">物理路径(P):</label>
            <div className="mt-[5px] flex items-start gap-[14px]">
              <input id="physical-path" value={path} onChange={(e) => setPath(e.target.value)} className="h-[46px] w-[606px] border-2 border-[#707070] bg-white px-1" />
              <DialogButton className="w-[62px] border-[#707070]">...</DialogButton>
            </div>
            <p className="mt-[6px] pl-[6px] leading-9">传递身份验证</p>
            <div className="mt-[26px] flex gap-[52px] pl-[2px]">
              <DialogButton className="w-[172px] border-[#707070]">连接为(C)...</DialogButton>
              <DialogButton className="w-[180px] border-[#707070]">测试设置(G)...</DialogButton>
            </div>
          </div>
        </fieldset>

        <fieldset className={`relative mt-[17px] h-[549px] w-[1026px] ${groupBox}`}>
          <legend className="ml-3 bg-[#efefef] px-1 leading-9">绑定</legend>
          <span className="absolute top-[17px] -right-[2px] bottom-[10px] w-1 bg-[#efefef]" />
          <div className="flex flex-col items-start pt-[17px] pl-[26px]">
            <div className="flex items-start">
              <div className="flex w-[232px] flex-col gap-[6px]">
                <label htmlFor="binding-type" className="pl-[6px] leading-9">类型(T):</label>
                <SelectField id="binding-type" options={['http', 'https']} className="w-full" />
              </div>
              <div className="ml-[18px] flex w-[424px] flex-col gap-[6px]">
                <label htmlFor="ip-address" className="leading-9">IP 地址(I):</label>
                <SelectField id="ip-address" options={['10.0.4.8']} className="w-full" />
              </div>
              <div className="ml-[14px] flex w-[116px] flex-col gap-[6px]">
                <label htmlFor="port" className="leading-9">端口(O):</label>
                <div className="relative">
                  <input id="port" value={port} onChange={(e) => setPort(e.target.value)} className="h-[46px] w-full border-2 border-[#2f608f] bg-white px-1" />
                  <span className="absolute top-[6px] left-[62px] h-[34px] w-[2px] bg-black" />
                </div>
              </div>
            </div>
            <label htmlFor="host-name" className="mt-[26px] pl-[6px] leading-9">主机名(H):</label>
            <input id="host-name" value={host} onChange={(e) => setHost(e.target.value)} className="mt-[6px] h-[46px] w-[604px] border-2 border-[#707070] bg-white px-1" />
            <p className="mt-[18px] pl-[6px] leading-9">示例: www.contoso.com 或 marketing.contoso.com</p>
          </div>
        </fieldset>

        <label className="mt-[14px] flex h-9 items-center gap-3">
          <span className="relative h-[26px] w-[26px]">
            <input type="checkbox" checked={autoStart} onChange={(e) => setAutoStart(e.target.checked)} className="block h-[26px] w-[26px] appearance-none border-2 border-[#707070] bg-white" />
            {autoStart && <svg className="pointer-events-none absolute inset-0" viewBox="0 0 26 26"><path d="M6 13l5 6 9-13" fill="none" stroke="#111" strokeWidth="4" /></svg>}
          </span>
          立即启动网站(M)
        </label>

        <div className="mt-14 flex justify-end gap-5">
          <div className="relative">
            <DialogButton className="w-[182px] border-[#3c7fb1]">确定</DialogButton>
            <span className="pointer-events-none absolute -top-[34px] -right-[14px] -bottom-[19px] -left-[75px] border-2 border-[#ff0000]" />
          </div>
          <DialogButton className="w-[194px] border-[#707070]">取消</DialogButton>
        </div>
      </form>
    </div>
  )
}

export default function App() {
  return (
    <div className="h-screen bg-[#77777d] pr-[2px] pb-[2px] text-2xl leading-9 text-black [font-family:'Noto_Sans','Noto_Sans_CJK_SC',sans-serif]">
      <Defs />
      <div className="flex h-full flex-col overflow-hidden rounded-br-2xl bg-[#efefef]">
        <div className="flex min-h-0 flex-1">
          <main className="relative flex-1 overflow-hidden bg-[#2e2e2e]">
            <DesktopIcons />
            <ExplorerWindow />
            <IisManagerWindow />
            <AddSiteDialog />
          </main>
          <div className="flex w-[34px] border-l border-white pt-[34px] pb-[203px] pl-[7px]">
            <div className="w-[19px] bg-[#868686]" />
          </div>
        </div>
        <div className="flex h-[34px] items-start border-t border-white pt-[7px] pl-[34px]">
          <div className="mr-[180px] h-[19px] flex-1 bg-[#868686]" />
          <ResizeGrip className="mt-[7px] mr-[5px] h-4 w-4 text-[#c0c0c0]" />
        </div>
      </div>
    </div>
  )
}
